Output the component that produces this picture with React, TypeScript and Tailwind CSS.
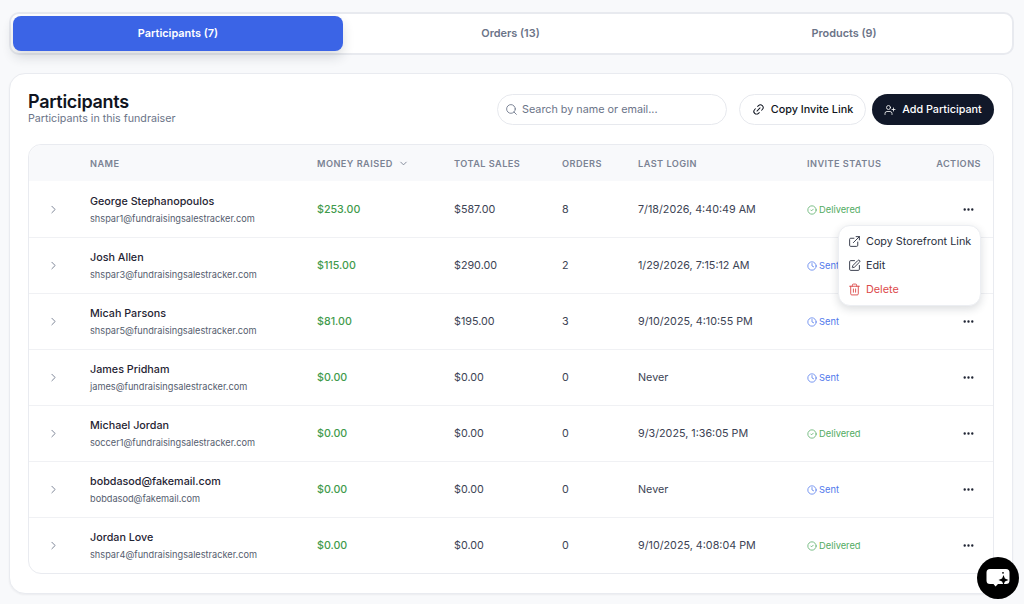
import { ChevronDown, ChevronRight, CircleCheck, Clock, Ellipsis, ExternalLink, Link2, Search, SquarePen, Trash2, UserPlus } from "lucide-react";

const rows = [
  { n: "George Stephanopoulos", e: "shspar1@fundraisingsalestracker.com", m: "$253.00", t: "$587.00", o: "8", l: "7/18/2026, 4:40:49 AM", s: "Delivered" },
  { n: "Josh Allen", e: "shspar3@fundraisingsalestracker.com", m: "$115.00", t: "$290.00", o: "2", l: "1/29/2026, 7:15:12 AM", s: "Sent" },
  { n: "Micah Parsons", e: "shspar5@fundraisingsalestracker.com", m: "$81.00", t: "$195.00", o: "3", l: "9/10/2025, 4:10:55 PM", s: "Sent" },
  { n: "James Pridham", e: "james@fundraisingsalestracker.com", m: "$0.00", t: "$0.00", o: "0", l: "Never", s: "Sent" },
  { n: "Michael Jordan", e: "soccer1@fundraisingsalestracker.com", m: "$0.00", t: "$0.00", o: "0", l: "9/3/2025, 1:36:05 PM", s: "Delivered" },
  { n: "bobdasod@fakemail.com", e: "bobdasod@fakemail.com", m: "$0.00", t: "$0.00", o: "0", l: "Never", s: "Sent" },
  { n: "Jordan Love", e: "shspar4@fundraisingsalestracker.com", m: "$0.00", t: "$0.00", o: "0", l: "9/10/2025, 4:08:04 PM", s: "Delivered" },
];

const cols = "grid grid-cols-[61px_227px_137px_108px_76px_169px_1fr_50px] items-center";

export default function App() {
  return (
    <div className="relative h-[604px] w-[1024px] overflow-hidden bg-[#f8f9fb] px-[9px] pt-3 font-['Inter',sans-serif] text-[#1f2433]">
      <div className="flex h-[43px] w-[1005px] gap-0 rounded-[10px] border-2 border-[#e8eaef] bg-white p-[2px]">
        <div className="flex w-[330px] items-center justify-center rounded-lg bg-[#3b64e6] text-[10.9px] font-semibold text-white shadow-[0_6px_12px_rgba(30,41,59,0.16)]">Participants (7)</div>
        <div className="flex w-[335px] items-center justify-center text-[10.9px] font-semibold text-[#6b7488]">Orders (13)</div>
        <div className="flex flex-1 items-center justify-center text-[10.9px] font-semibold text-[#6b7488]">Products (9)</div>
      </div>

      <div className="mt-[18px] h-[521px] w-[1004px] rounded-2xl border border-[#e9ebf0] bg-white px-[18px] pt-[20px] shadow-[0_1px_2px_rgba(30,41,59,0.06)]">
        <div className="flex h-[31px] items-center justify-between">
          <div>
            <h1 className="-mt-[1px] text-[18px] leading-[17px] font-semibold tracking-[-0.3px] text-[#0f1420]">Participants</h1>
            <p className="mt-[2px] text-[10.7px] leading-[14px] text-[#6b7488]">Participants in this fundraiser</p>
          </div>
          <div className="flex items-center">
            <div className="flex h-[31px] w-[230px] items-center gap-[4px] rounded-full border border-[#e7e9ee] bg-white pl-[7px] text-[10.8px] text-[#6b7488]">
              <Search size={13} strokeWidth={1.6} />
              <span className="pt-[1px]">Search by name or email...</span>
            </div>
            <div className="ml-[12px] flex h-[31px] w-[127px] items-center justify-center gap-[6px] rounded-full border border-[#e7e9ee] bg-white text-[10.8px] font-medium text-[#0f1420]">
              <Link2 size={13} className="-rotate-45" strokeWidth={1.8} />
              <span className="pt-[1px]">Copy Invite Link</span>
            </div>
            <div className="ml-[6px] flex h-[31px] w-[122px] items-center justify-center gap-[6px] rounded-full bg-[#111829] text-[10.8px] font-medium text-white">
              <UserPlus size={12} strokeWidth={1.6} />
              <span className="pt-[1px]">Add Participant</span>
            </div>
          </div>
        </div>

        <div className="relative mt-[19px] overflow-visible rounded-[13px] border border-[#e9ebf0] bg-white">
          <div className={`${cols} h-[36px] rounded-t-[13px] bg-[#f8f9fb] pt-[1px] text-[9.2px] font-semibold tracking-[0.45px] text-[#7b8394]`}>
            <span />
            <span>NAME</span>
            <span className="flex items-center gap-[5px]">MONEY RAISED <ChevronDown size={11} strokeWidth={2} /></span>
            <span>TOTAL SALES</span>
            <span>ORDERS</span>
            <span>LAST LOGIN</span>
            <span>INVITE STATUS</span>
            <span className="-ml-[20px] pr-[12px] text-right">ACTIONS</span>
          </div>
          {rows.map((r, i) => (
            <div key={r.e} className={`${cols} h-[56px] border-t pt-[1px] ${i > 0 ? "border-[#f0f1f4]" : "border-transparent"}`}>
              <span className="-mt-[2px] flex justify-center pr-[12px] text-[#6b7488]"><ChevronRight size={13} strokeWidth={1.6} /></span>
              <div className="-mt-[1px]">
                <div className="text-[10.75px] leading-[16px] font-medium text-[#1f2433]">{r.n}</div>
                <div className="mt-[2px] text-[9.2px] leading-[13px] text-[#555d6e]">{r.e}</div>
              </div>
              <span className="text-[10.7px] font-medium text-[#3f9a4b]">{r.m}</span>
              <span className="text-[10.75px] text-[#3c4354]">{r.t}</span>
              <span className="text-[10.75px] text-[#3c4354]">{r.o}</span>
              <span className="text-[10.75px] text-[#3c4354]">{r.l}</span>
              {r.s === "Delivered" ? (
                <span className="flex items-center gap-[2px] text-[9.3px] text-[#52ab62]"><CircleCheck size={10} strokeWidth={1.8} />Delivered</span>
              ) : (
                <span className="flex items-center gap-[2px] text-[9.3px] text-[#4f78ec]"><Clock size={10} strokeWidth={1.8} />Sent</span>
              )}
              <span className="-mt-[2px] flex justify-end pr-[18px] text-[#1f2433]"><Ellipsis size={13} strokeWidth={2.4} /></span>
            </div>
          ))}

          <div className="absolute top-[80px] left-[809px] z-10 flex h-[81px] w-[143px] flex-col justify-center gap-[6px] rounded-xl border border-[#eceef2] bg-white pt-[2px] pl-[9px] text-[10.8px] text-[#2a3040] shadow-[0_3px_8px_rgba(30,41,59,0.16)]">
            <div className="flex h-[18px] items-center gap-[5px]"><ExternalLink size={13} strokeWidth={1.7} className="-mt-[2px]" />Copy Storefront Link</div>
            <div className="flex h-[18px] items-center gap-[5px]"><SquarePen size={13} strokeWidth={1.7} className="-mt-[2px]" />Edit</div>
            <div className="flex h-[18px] items-center gap-[5px] text-[#dc4a4a]"><Trash2 size={13} strokeWidth={1.7} className="-mt-[2px]" />Delete</div>
          </div>
        </div>
      </div>

      <div className="absolute top-[557px] left-[977px] flex h-[42px] w-[42px] items-center justify-center rounded-full bg-black">
        <svg width="26" height="24" viewBox="0 0 26 24" fill="none">
          <path d="M5 3h16a3.5 3.5 0 0 1 3.5 3.5v8a3.5 3.5 0 0 1-3.5 3.5h-8l-2.5 2.5-2-2.5H5A3.5 3.5 0 0 1 1.5 14.5v-8A3.5 3.5 0 0 1 5 3z" fill="#fff" />
          <path d="M18.5 9l1.4 3.6 3.6 1.4-3.6 1.4-1.4 3.6-1.4-3.6-3.6-1.4 3.6-1.4z" fill="#000" />
          <circle cx="18" cy="6.8" r="0.9" fill="#000" />
        </svg>
      </div>
    </div>
  );
}
